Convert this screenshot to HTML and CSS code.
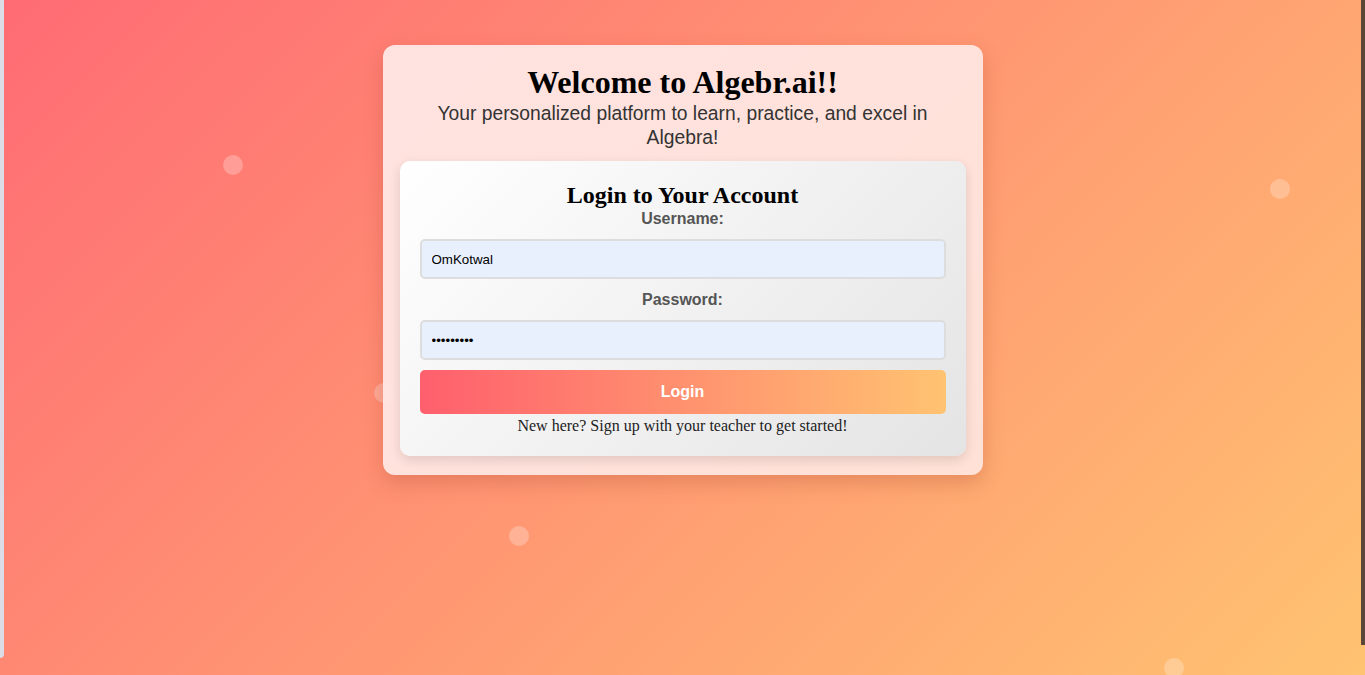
FILE: index.html
```html
<!DOCTYPE html>
<html lang="en">
<head>
<meta charset="utf-8">
<title>Algebr.ai Login</title>
<link rel="stylesheet" href="styles.css">
</head>
<body>
<div class="page">
  <span class="edge edge-left"></span>
  <span class="edge edge-right"></span>
  <span class="bubble b1"></span>
  <span class="bubble b2"></span>
  <span class="bubble b3"></span>
  <span class="bubble b4"></span>
  <span class="bubble b5"></span>
  <div class="card">
    <h1 class="title">Welcome to Algebr.ai!!</h1>
    <p class="subtitle">Your personalized platform to learn, practice, and excel in Algebra!</p>
    <form class="login">
      <h2 class="login-title">Login to Your Account</h2>
      <label class="label" for="u">Username:</label>
      <input class="field" id="u" type="text" value="OmKotwal">
      <label class="label label-pw" for="p">Password:</label>
      <input class="field field-pw" id="p" type="password" value="123456789">
      <button class="btn" type="button">Login</button>
      <p class="note">New here? Sign up with your teacher to get started!</p>
    </form>
  </div>
</div>
</body>
</html>
```
FILE: styles.css
```css
* { box-sizing: border-box; }
html, body { margin: 0; height: 100%; overflow: hidden; }
body { background: #ffc371; }
.page {
  position: relative;
  height: 675px;
  background: linear-gradient(135deg, #ff6b74 0%, #ffc371 100%);
  display: flex;
  justify-content: center;
  align-items: flex-start;
  padding-top: 45px;
  font-family: "Liberation Sans", Arial, sans-serif;
}
.edge { position: absolute; top: 0; }
.edge-left { left: 0; width: 4px; height: 658px; background: #dcdce6; border-bottom-right-radius: 4px; }
.edge-right { right: 0; width: 4px; height: 645px; background: #5b4638; }
.bubble {
  position: absolute;
  width: 20px; height: 20px;
  border-radius: 50%;
  background: rgba(255,255,255,0.25);
}
.b1 { left: 223px; top: 155px; }
.b2 { left: 1270px; top: 179px; }
.b3 { left: 374px; top: 383px; }
.b4 { left: 509px; top: 526px; }
.b5 { left: 1164px; top: 658px; }
.card {
  position: relative;
  width: 600px;
  padding: 18px 17px 19px;
  border-radius: 12px;
  background: linear-gradient(135deg, rgba(255,232,230,0.95), rgba(255,228,220,0.95));
  box-shadow: 0 8px 20px rgba(150,60,40,0.25);
  text-align: center;
}
.title {
  margin: 0;
  font-family: "Liberation Serif", "Times New Roman", serif;
  font-size: 32px;
  line-height: 39px;
  font-weight: bold;
  color: #000;
}
.subtitle {
  margin: 0 auto 11px;
  max-width: 520px;
  font-size: 19.3px;
  line-height: 24px;
  color: #333;
}
.login {
  display: flex;
  flex-direction: column;
  align-items: stretch;
  padding: 21px 20px 20px;
  border-radius: 10px;
  background: linear-gradient(135deg, #ffffff 0%, #e4e4e4 100%);
  box-shadow: 0 4px 12px rgba(0,0,0,0.12);
}
.login-title {
  margin: 0;
  font-family: "Liberation Serif", "Times New Roman", serif;
  font-size: 24px;
  line-height: 27px;
  font-weight: bold;
  color: #000;
}
.label {
  display: block;
  font-size: 16px;
  line-height: 20px;
  font-weight: bold;
  color: #555;
  margin-bottom: 10px;
}
.field {
  height: 40px;
  padding: 0 10px;
  border: 2px solid #dddddd;
  border-radius: 5px;
  background: #e8f0fe;
  font-family: "Liberation Sans", Arial, sans-serif;
  font-size: 13.33px;
  color: #000;
  margin-bottom: 11px;
}
.field-pw { margin-bottom: 10px; }
.btn {
  height: 44px;
  border: 0;
  border-radius: 5px;
  background: linear-gradient(90deg, #ff5f6d 0%, #ffc371 100%);
  color: #fff;
  font-family: "Liberation Sans", Arial, sans-serif;
  font-size: 16px;
  font-weight: bold;
}
.note {
  margin: 2px 0 0;
  font-family: "Liberation Serif", "Times New Roman", serif;
  font-size: 16px;
  line-height: 20px;
  color: #222;
}
```
